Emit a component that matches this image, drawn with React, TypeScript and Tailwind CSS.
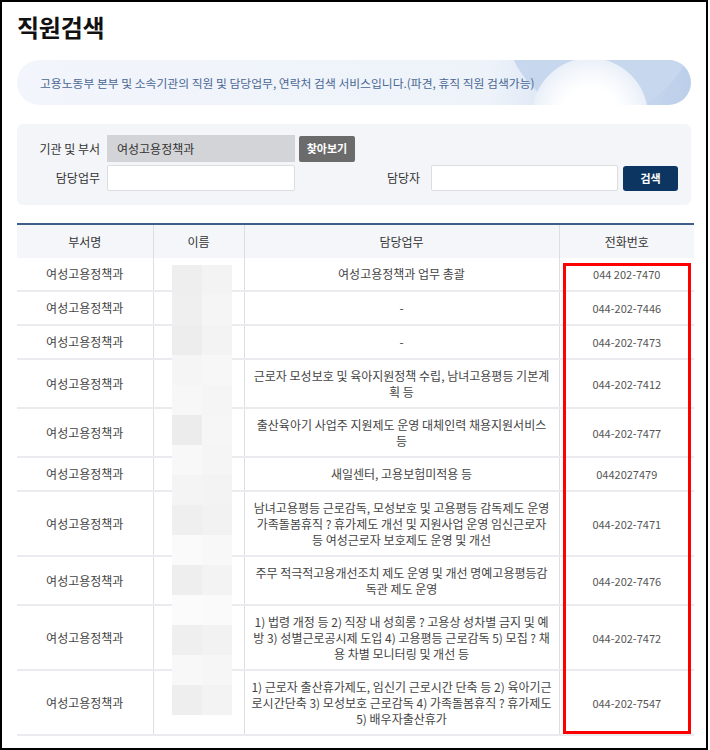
import React from 'react';

type Row = {
  dept: string;
  duty: string[];
  phone: string;
};

const ROWS: Row[] = [
  { dept: '여성고용정책과', duty: ['여성고용정책과 업무 총괄'], phone: '044 202-7470' },
  { dept: '여성고용정책과', duty: ['-'], phone: '044-202-7446' },
  { dept: '여성고용정책과', duty: ['-'], phone: '044-202-7473' },
  {
    dept: '여성고용정책과',
    duty: ['근로자 모성보호 및 육아지원정책 수립, 남녀고용평등 기본계', '획 등'],
    phone: '044-202-7412',
  },
  {
    dept: '여성고용정책과',
    duty: ['출산육아기 사업주 지원제도 운영 대체인력 채용지원서비스', '등'],
    phone: '044-202-7477',
  },
  { dept: '여성고용정책과', duty: ['새일센터, 고용보험미적용 등'], phone: '0442027479' },
  {
    dept: '여성고용정책과',
    duty: [
      '남녀고용평등 근로감독, 모성보호 및 고용평등 감독제도 운영',
      '가족돌봄휴직 ? 휴가제도 개선 및 지원사업 운영 임신근로자',
      '등 여성근로자 보호제도 운영 및 개선',
    ],
    phone: '044-202-7471',
  },
  {
    dept: '여성고용정책과',
    duty: ['주무 적극적고용개선조치 제도 운영 및 개선 명예고용평등감', '독관 제도 운영'],
    phone: '044-202-7476',
  },
  {
    dept: '여성고용정책과',
    duty: [
      '1) 법령 개정 등 2) 직장 내 성희롱 ? 고용상 성차별 금지 및 예',
      '방 3) 성별근로공시제 도입 4) 고용평등 근로감독 5) 모집 ? 채',
      '용 차별 모니터링 및 개선 등',
    ],
    phone: '044-202-7472',
  },
  {
    dept: '여성고용정책과',
    duty: [
      '1) 근로자 출산휴가제도, 임신기 근로시간 단축 등 2) 육아기근',
      '로시간단축 3) 모성보호 근로감독 4) 가족돌봄휴직 ? 휴가제도',
      '5) 배우자출산휴가',
    ],
    phone: '044-202-7547',
  },
];

// blurred name column, 2 x 15 tiles of 30px
const MOSAIC: [string, string][] = [
  ['#eeeeee', '#f3f3f3'],
  ['#efefef', '#f5f5f5'],
  ['#ededed', '#f3f3f3'],
  ['#f5f5f5', '#f7f7f7'],
  ['#f7f7f7', '#f5f5f5'],
  ['#ececec', '#f6f6f6'],
  ['#f8f8f8', '#f5f5f5'],
  ['#f4f4f4', '#f3f3f3'],
  ['#efefef', '#f2f2f2'],
  ['#fafafa', '#f8f8f8'],
  ['#eeeeee', '#f3f3f3'],
  ['#fbfbfb', '#fafafa'],
  ['#efefef', '#f2f2f2'],
  ['#f8f8f8', '#f6f6f6'],
  ['#eeeeee', '#f3f3f3'],
];

function Banner() {
  return (
    <div className="relative mt-[17px] flex h-[45px] items-center overflow-hidden rounded-full bg-[linear-gradient(90deg,#f2f5fb_0%,#eef3fa_70%,#c9d8ee_90%,#bccfea_100%)] pl-[23px]">
      <div
        aria-hidden="true"
        className="absolute left-[488px] top-[-135px] h-[190px] w-[190px] rounded-full bg-[#c7d7ee]"
      />
      <div
        aria-hidden="true"
        className="absolute left-[515px] top-[-2px] h-[116px] w-[116px] rounded-full bg-[radial-gradient(circle,#ffffff_35%,#f1f5fb_60%,#dfe8f5_85%,rgba(223,232,245,0)_100%)]"
      />
      <p className="relative text-[11.8px] leading-none text-[#4a6894]">
        고용노동부 본부 및 소속기관의 직원 및 담당업무, 연락처 검색 서비스입니다.(파견, 휴직 직원 검색가능)
      </p>
    </div>
  );
}

function SearchBox() {
  return (
    <div className="mt-[19px] flex flex-col gap-[3px] rounded-[6px] bg-[#f4f5f8] pb-[14px] pt-[11px] text-[12px] text-[#333]">
      <div className="flex items-center">
        <span className="w-[90px] pr-[7px] text-right">기관 및 부서</span>
        <div className="flex h-[27px] w-[188px] items-center bg-[#d3d4d7] px-[10px] text-[#333]">
          여성고용정책과
        </div>
        <button className="ml-[4px] h-[26px] w-[56px] rounded-[2px] bg-[#6b6b6b] text-[11px] font-bold text-white">
          찾아보기
        </button>
      </div>
      <div className="flex items-center">
        <span className="w-[90px] pr-[7px] text-right">담당업무</span>
        <div className="h-[26px] w-[188px] rounded-[2px] border border-[#dcdde0] bg-white" />
        <span className="w-[136px] pr-[11px] text-right">담당자</span>
        <div className="h-[26px] w-[187px] rounded-[2px] border border-[#dcdde0] bg-white" />
        <button className="ml-[5px] h-[25px] w-[55px] rounded-[3px] bg-[#0d3561] text-[11px] font-bold text-white">
          검색
        </button>
      </div>
    </div>
  );
}

function StaffTable() {
  return (
    <div className="relative mt-[18px]">
      <table className="w-[677px] table-fixed border-collapse text-[12px] text-[#444]">
        <colgroup>
          <col className="w-[136px]" />
          <col className="w-[91px]" />
          <col className="w-[315px]" />
          <col className="w-[135px]" />
        </colgroup>
        <thead>
          <tr className="h-[34px] border-t-2 border-[#3d5f88] bg-[#f4f6f9] text-[#333]">
            <th className="border-r border-[#dcdee3] font-normal">부서명</th>
            <th className="border-r border-[#dcdee3] font-normal">이름</th>
            <th className="border-r border-[#dcdee3] font-normal">담당업무</th>
            <th className="font-normal">전화번호</th>
          </tr>
        </thead>
        <tbody>
          {ROWS.map((row, idx) => {
            const pad = row.duty.length > 1 ? 'pt-[8px] pb-[7px]' : 'py-[8px]';
            return (
              <tr key={idx} className="border-b-2 border-[#eaebee] text-center leading-[16px]">
                <td className={`border-r border-[#dcdee3] ${pad}`}>{row.dept}</td>
                <td className="border-r border-[#dcdee3]" />
                <td className={`border-r border-[#dcdee3] ${pad}`}>
                  {row.duty.map((line, i) => (
                    <span key={i} className="block whitespace-nowrap">
                      {line}
                    </span>
                  ))}
                </td>
                <td className={`text-[11px] text-[#555] ${pad}`}>{row.phone}</td>
              </tr>
            );
          })}
        </tbody>
      </table>

      {/* blurred names */}
      <div aria-hidden="true" className="absolute left-[155px] top-[42px] grid w-[60px] grid-cols-2">
        {MOSAIC.flatMap(([a, b], i) => [
          <div key={`${i}a`} className="h-[30px]" style={{ backgroundColor: a }} />,
          <div key={`${i}b`} className="h-[30px]" style={{ backgroundColor: b }} />,
        ])}
      </div>

      {/* highlight box */}
      <div
        aria-hidden="true"
        className="pointer-events-none absolute left-[546px] top-[40px] h-[471px] w-[128px] border-[3px] border-[#ff0000]"
      />
    </div>
  );
}

export default function App() {
  return (
    <div className="h-[750px] w-[710px] bg-white font-['Noto_Sans_CJK_KR','Noto_Sans',sans-serif]">
      <div className="h-[750px] w-[708px] overflow-hidden border-2 border-black px-[15px] pt-[9px]">
        <h1 className="text-[24px] font-bold leading-[32px] tracking-[-0.25px] text-[#111]">직원검색</h1>
        <Banner />
        <SearchBox />
        <StaffTable />
      </div>
    </div>
  );
}
